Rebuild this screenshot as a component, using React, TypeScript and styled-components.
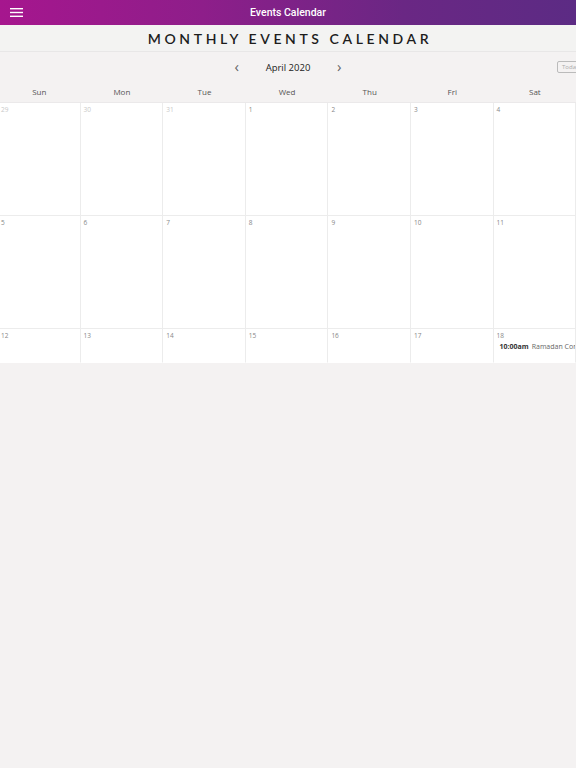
import styled, { createGlobalStyle } from "styled-components";

const GlobalStyle = createGlobalStyle`
  html, body {
    margin: 0;
    padding: 0;
    background: #f4f2f2;
    font-family: "Open Sans", "Liberation Sans", sans-serif;
  }
  #root {
    min-height: 768px;
  }
`;

type Day = { n: number; muted?: boolean; events?: { time: string; title: string }[] };

const weeks: Day[][] = [
  [{ n: 29, muted: true }, { n: 30, muted: true }, { n: 31, muted: true }, { n: 1 }, { n: 2 }, { n: 3 }, { n: 4 }],
  [{ n: 5 }, { n: 6 }, { n: 7 }, { n: 8 }, { n: 9 }, { n: 10 }, { n: 11 }],
  [
    { n: 12 },
    { n: 13 },
    { n: 14 },
    { n: 15 },
    { n: 16 },
    { n: 17 },
    { n: 18, events: [{ time: "10:00am", title: "Ramadan Conference" }] },
  ],
];

const dayNames = ["Sun", "Mon", "Tue", "Wed", "Thu", "Fri", "Sat"];

export default function App() {
  return (
    <>
      <GlobalStyle />
      <Page>
        <TopBar>
          <MenuButton aria-label="menu">
            <svg width="13" height="9" viewBox="0 0 13 9">
              <rect x="0" y="0" width="13" height="1.4" fill="#fff" />
              <rect x="0" y="3.8" width="13" height="1.4" fill="#fff" />
              <rect x="0" y="7.6" width="13" height="1.4" fill="#fff" />
            </svg>
          </MenuButton>
          <TopTitle>Events Calendar</TopTitle>
        </TopBar>

        <TitleBand>
          <PageTitle>MONTHLY EVENTS CALENDAR</PageTitle>
        </TitleBand>

        <Calendar>
          <NavRow>
            <Arrow>‹</Arrow>
            <MonthLabel>April 2020</MonthLabel>
            <Arrow>›</Arrow>
            <TodayButton>Today</TodayButton>
          </NavRow>

          <Grid>
            {dayNames.map((d) => (
              <DayName key={d}>{d}</DayName>
            ))}
            {weeks.map((week, wi) =>
              week.map((day) => (
                <Cell key={`${wi}-${day.n}`} $short={wi === 2}>
                  <DayNum $muted={day.muted}>{day.n}</DayNum>
                  {day.events?.map((ev) => (
                    <EventLine key={ev.title}>
                      <Dot />
                      <EventTime>{ev.time}</EventTime>
                      <EventTitle>{ev.title}</EventTitle>
                    </EventLine>
                  ))}
                </Cell>
              ))
            )}
          </Grid>
        </Calendar>
      </Page>
    </>
  );
}

const Page = styled.div`
  width: 576px;
  overflow: hidden;
`;

const TopBar = styled.header`
  height: 25px;
  display: flex;
  align-items: center;
  justify-content: center;
  position: relative;
  background: linear-gradient(90deg, #a6168e 0%, #8e1e8a 35%, #6a2784 70%, #5c2b84 100%);
`;

const MenuButton = styled.div`
  position: absolute;
  left: 10px;
  top: 8px;
  display: flex;
`;

const TopTitle = styled.h1`
  margin: 0;
  color: #fff;
  font-family: Roboto, "Liberation Sans", sans-serif;
  font-size: 10.5px;
  font-weight: 500;
`;

const TitleBand = styled.div`
  height: 26px;
  display: flex;
  align-items: center;
  justify-content: center;
  background: #f3f3f2;
  border-bottom: 1px solid #e8e7e7;
  padding-left: 4px;
`;

const PageTitle = styled.h2`
  margin: 0;
  font-family: Lato, "Liberation Sans", sans-serif;
  font-size: 14px;
  font-weight: 600;
  letter-spacing: 3.6px;
  color: #1d1d1d;
`;

const Calendar = styled.section`
  background: #f4f2f2;
`;

const NavRow = styled.div`
  height: 29px;
  display: flex;
  align-items: center;
  justify-content: center;
  gap: 22px;
  position: relative;
  padding-top: 1px;
  box-sizing: border-box;
`;

const Arrow = styled.span`
  font-size: 15px;
  color: #666;
  line-height: 1;
  margin-top: -2px;
`;

const MonthLabel = styled.span`
  font-size: 9.5px;
  color: #222;
  width: 54px;
  text-align: center;
`;

const TodayButton = styled.span`
  position: absolute;
  right: -8px;
  top: 9px;
  font-size: 6px;
  color: #aaa;
  border: 1px solid #bbb;
  border-radius: 2px;
  padding: 1px 4px;
`;

const Grid = styled.div`
  display: grid;
  grid-template-columns: repeat(7, 82.6px);
  margin-left: -2px;
  width: 580px;
`;

const DayName = styled.div`
  height: 21px;
  display: flex;
  align-items: center;
  justify-content: center;
  font-size: 8px;
  color: #555;
  border-bottom: 1px solid #ebe9ea;
`;

const Cell = styled.div<{ $short?: boolean }>`
  height: ${(p) => (p.$short ? "34px" : "113px")};
  background: #fff;
  border-right: 1px solid #ececec;
  border-bottom: 1px solid ${(p) => (p.$short ? "transparent" : "#ececec")};
  padding: 2px 3px;
  box-sizing: border-box;
  overflow: hidden;
`;

const DayNum = styled.div<{ $muted?: boolean }>`
  font-size: 6.5px;
  color: ${(p) => (p.$muted ? "#c8c8c8" : "#888")};
  line-height: 10px;
`;

const EventLine = styled.div`
  display: flex;
  align-items: center;
  gap: 2px;
  font-size: 7px;
  white-space: nowrap;
  margin-top: 1px;
`;

const Dot = styled.span`
  width: 3px;
  height: 3px;
  border-radius: 50%;
  background: #4caf50;
  margin-right: 1px;
`;

const EventTime = styled.span`
  font-weight: 700;
  color: #333;
`;

const EventTitle = styled.span`
  color: #666;
  margin-left: 1px;
`;
